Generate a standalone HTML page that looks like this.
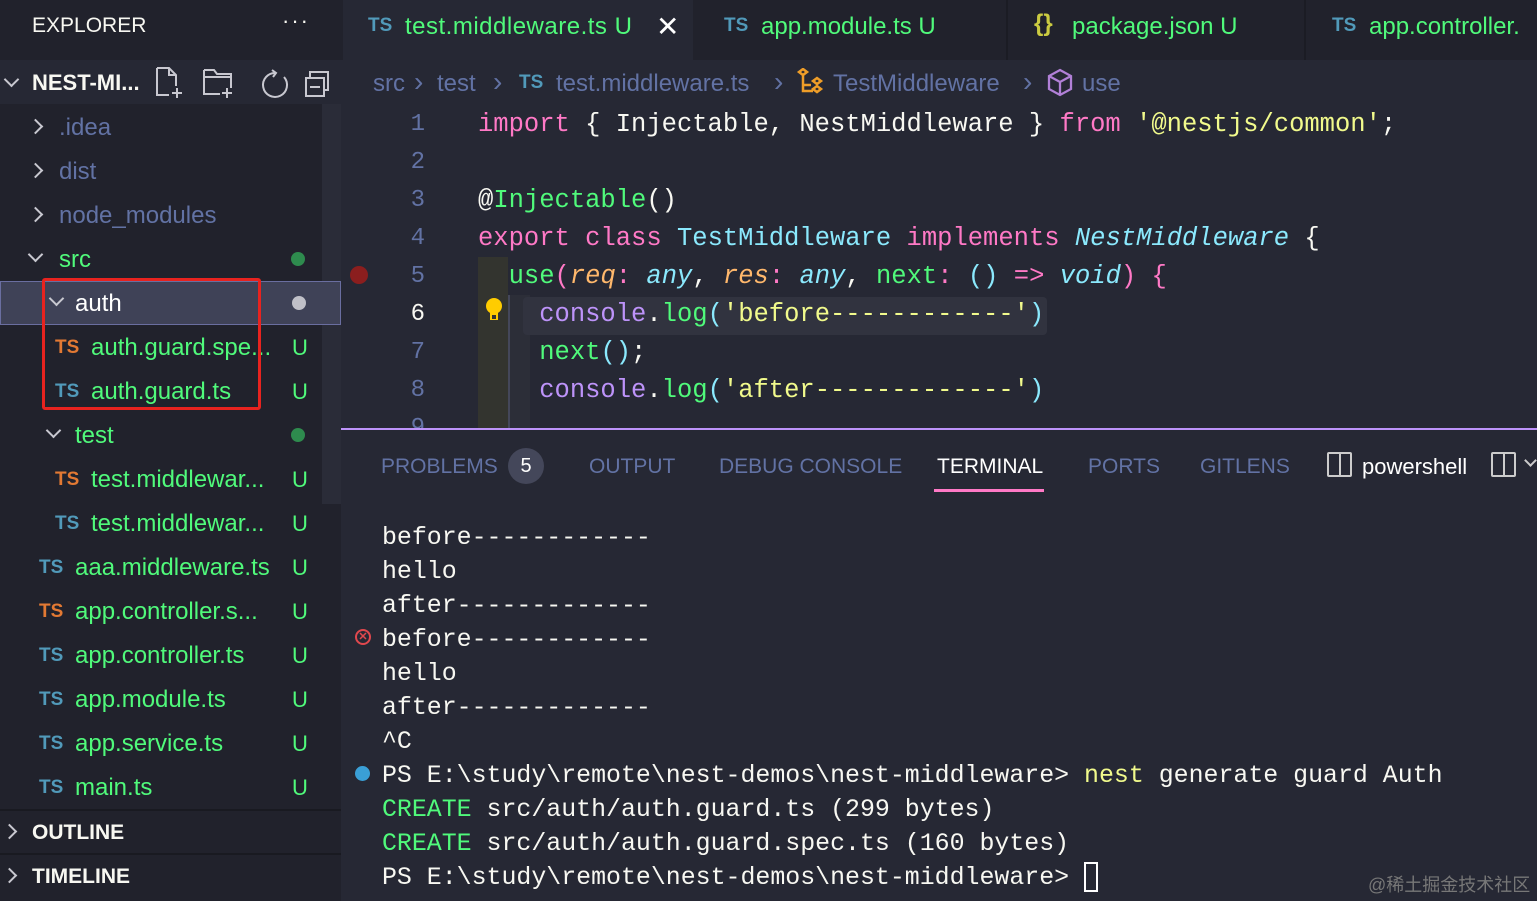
<!DOCTYPE html>
<html><head><meta charset="utf-8"><style>
*{margin:0;padding:0;box-sizing:border-box}
body{width:1537px;height:901px;overflow:hidden;background:#262834;font-family:"Liberation Sans","Noto Sans CJK SC",sans-serif;position:relative;color:#f8f8f2}
.a{position:absolute;white-space:pre}
.side{position:absolute;left:0;top:0;width:341px;height:901px;background:#21222c}
.row{position:absolute;left:0;width:341px;height:44px;font-size:24px;line-height:46px}
.ts{font-weight:bold;font-size:19px;color:#519aba;position:absolute;top:0}
.tso{color:#e37933}
.g{color:#50fa7b}
.u{position:absolute;left:292px;color:#50fa7b;font-size:22px}
.chev{position:absolute;width:11px;height:11px;border-right:2px solid #c8c8d0;border-bottom:2px solid #c8c8d0}
.mono{font-family:"Liberation Mono",monospace}
.code{font-size:25.5px;line-height:38px}
.term{font-size:24.9px;line-height:34px;color:#f8f8f2}
.pk{color:#ff79c6}.gr{color:#50fa7b}.cy{color:#8be9fd}.ye{color:#f1fa8c}.or{color:#ffb86c}.pu{color:#bd93f9}
.ln{color:#6272a4;font-size:24px;width:40px;text-align:right}
.ptab{font-size:21px;color:#6272a4;top:455px}
.bc{font-size:24px;color:#6272a4;top:70px}
</style></head><body>
<div class="side">
 <div class="a" style="left:32px;top:14px;font-size:21px;color:#f8f8f2">EXPLORER</div>
 <div class="a" style="left:282px;top:8px;font-size:22px;color:#f8f8f2;letter-spacing:2px">···</div>
 <div style="position:absolute;left:0;top:60px;width:341px;height:44px;background:#262834"></div>
 <div class="chev" style="left:6px;top:74px;transform:rotate(45deg)"></div>
 <div class="a" style="left:32px;top:70px;font-size:22px;font-weight:bold">NEST-MI...</div>
 <svg class="a" style="left:154px;top:66px" width="180" height="34" fill="none" stroke="#c8c8d0" stroke-width="2">
  <path d="M3 2h12l7 7v11M3 2v27h12M15 2v7h7M23 22v10M18 27h10"/>
  <path d="M50 4h10l3 4h14v14M50 4v24h16M50 11h27M73 22v10M68 27h10"/>
  <path d="M122 7a12 12 0 1 0 8 4M118 4l4 3-3 4"/>
  <path d="M152 12h18v18h-18zM156 12v-6h18v18h-4M156 21h10"/>
 </svg>
 <div style="position:absolute;left:322px;top:104px;width:19px;height:400px;background:#2a2c38"></div>
 <div class="row" style="top:105px"><div class="chev" style="left:30px;top:16px;transform:rotate(-45deg)"></div><span class="a" style="left:59px;color:#6272a4">.idea</span></div>
 <div class="row" style="top:149px"><div class="chev" style="left:30px;top:16px;transform:rotate(-45deg)"></div><span class="a" style="left:59px;color:#6272a4">dist</span></div>
 <div class="row" style="top:193px"><div class="chev" style="left:30px;top:16px;transform:rotate(-45deg)"></div><span class="a" style="left:59px;color:#6272a4">node_modules</span></div>
 <div class="row" style="top:237px"><div class="chev" style="left:30px;top:12px;transform:rotate(45deg)"></div><span class="a g" style="left:59px">src</span><div class="a" style="left:291px;top:15px;width:14px;height:14px;border-radius:50%;background:#2e8b4e"></div></div>
 <div class="row" style="top:281px;background:#3f4257;border:1px solid #6a6ea0"><div class="chev" style="left:50px;top:11px;transform:rotate(45deg)"></div><span class="a" style="left:74px;top:-1px;color:#fff">auth</span><div class="a" style="left:291px;top:14px;width:14px;height:14px;border-radius:50%;background:#c0c0c8"></div></div>
 <div class="row" style="top:325px"><span class="ts tso" style="left:55px">TS</span><span class="a g" style="left:91px">auth.guard.spe...</span><span class="u">U</span></div>
 <div class="row" style="top:369px"><span class="ts" style="left:55px">TS</span><span class="a g" style="left:91px">auth.guard.ts</span><span class="u">U</span></div>
 <div class="row" style="top:413px"><div class="chev" style="left:48px;top:12px;transform:rotate(45deg)"></div><span class="a g" style="left:75px">test</span><div class="a" style="left:291px;top:15px;width:14px;height:14px;border-radius:50%;background:#2e8b4e"></div></div>
 <div class="row" style="top:457px"><span class="ts tso" style="left:55px">TS</span><span class="a g" style="left:91px">test.middlewar...</span><span class="u">U</span></div>
 <div class="row" style="top:501px"><span class="ts" style="left:55px">TS</span><span class="a g" style="left:91px">test.middlewar...</span><span class="u">U</span></div>
 <div class="row" style="top:545px"><span class="ts" style="left:39px">TS</span><span class="a g" style="left:75px">aaa.middleware.ts</span><span class="u">U</span></div>
 <div class="row" style="top:589px"><span class="ts tso" style="left:39px">TS</span><span class="a g" style="left:75px">app.controller.s...</span><span class="u">U</span></div>
 <div class="row" style="top:633px"><span class="ts" style="left:39px">TS</span><span class="a g" style="left:75px">app.controller.ts</span><span class="u">U</span></div>
 <div class="row" style="top:677px"><span class="ts" style="left:39px">TS</span><span class="a g" style="left:75px">app.module.ts</span><span class="u">U</span></div>
 <div class="row" style="top:721px"><span class="ts" style="left:39px">TS</span><span class="a g" style="left:75px">app.service.ts</span><span class="u">U</span></div>
 <div class="row" style="top:765px"><span class="ts" style="left:39px">TS</span><span class="a g" style="left:75px">main.ts</span><span class="u">U</span></div>
 <div style="position:absolute;left:0;top:809px;width:341px;height:2px;background:#191a21"></div>
 <div class="row" style="top:810px"><div class="chev" style="left:4px;top:16px;transform:rotate(-45deg)"></div><span class="a" style="left:32px;font-size:21px;font-weight:bold">OUTLINE</span></div>
 <div style="position:absolute;left:0;top:853px;width:341px;height:2px;background:#191a21"></div>
 <div class="row" style="top:854px"><div class="chev" style="left:4px;top:16px;transform:rotate(-45deg)"></div><span class="a" style="left:32px;font-size:21px;font-weight:bold">TIMELINE</span></div>
 <div style="position:absolute;left:42px;top:278px;width:219px;height:132px;border:3px solid #e8231f;border-radius:3px"></div>
</div>
<!-- tabs -->
<div style="position:absolute;left:341px;top:0;width:1196px;height:60px;background:#21222c"></div>
<div style="position:absolute;left:343px;top:0;width:350px;height:60px;background:#262834"></div>
<div class="a" style="left:368px;top:15px;font-size:19px;font-weight:bold;color:#519aba">TS</div>
<div class="a g" style="left:405px;top:13px;font-size:24px;letter-spacing:0.5px">test.middleware.ts U</div>
<div class="a" style="left:656px;top:10px;font-size:28px;color:#fff">✕</div>
<div style="position:absolute;left:1006px;top:0;width:2px;height:60px;background:#1b1c24"></div>
<div style="position:absolute;left:1304px;top:0;width:2px;height:60px;background:#1b1c24"></div>
<div class="a" style="left:724px;top:15px;font-size:19px;font-weight:bold;color:#519aba">TS</div>
<div class="a g" style="left:761px;top:13px;font-size:24px">app.module.ts U</div>
<div class="a" style="left:1034px;top:10px;font-size:24px;font-weight:bold;color:#cbcb41">{}</div>
<div class="a g" style="left:1072px;top:13px;font-size:24px">package.json U</div>
<div class="a" style="left:1332px;top:15px;font-size:19px;font-weight:bold;color:#519aba">TS</div>
<div class="a g" style="left:1369px;top:13px;font-size:24px">app.controller.</div>
<!-- breadcrumb -->
<div class="a bc" style="left:373px">src</div>
<div class="a bc" style="left:414px;font-size:28px;top:66px">›</div>
<div class="a bc" style="left:437px">test</div>
<div class="a bc" style="left:493px;font-size:28px;top:66px">›</div>
<div class="a bc" style="left:519px;top:72px;font-size:19px;font-weight:bold;color:#519aba">TS</div>
<div class="a bc" style="left:556px">test.middleware.ts</div>
<div class="a bc" style="left:774px;font-size:28px;top:66px">›</div>
<svg class="a" style="left:796px;top:68px" width="30" height="30" fill="none" stroke="#ee9d28" stroke-width="2.5"><path d="M3 4l4-3 4 3-4 3zM7 7v10h8M17 13l4-3 4 3-4 3zM17 21l4-3 4 3-4 3zM7 17v6h10"/></svg>
<div class="a bc" style="left:833px">TestMiddleware</div>
<div class="a bc" style="left:1023px;font-size:28px;top:66px">›</div>
<svg class="a" style="left:1046px;top:68px" width="28" height="30" fill="none" stroke="#b180d7" stroke-width="2.3"><path d="M14 2l11 6v13l-11 6-11-6V8zM3 8l11 6 11-6M14 14v13"/></svg>
<div class="a bc" style="left:1082px">use</div>
<!-- code -->
<div class="a" style="left:350px;top:266px;width:18px;height:18px;border-radius:50%;background:#8b1e1e"></div>
<div style="position:absolute;left:478px;top:257px;width:30px;height:171px;background:#33342f"></div>
<div style="position:absolute;left:508px;top:295px;width:22px;height:133px;background:#2c2e38;border-left:2px solid #44475a"></div>
<div style="position:absolute;left:523px;top:297px;width:524px;height:38px;background:#31333f;border-radius:4px"></div>
<svg class="a" style="left:484px;top:297px" width="20" height="28"><circle cx="10" cy="9" r="8" fill="#ffcc00"/><rect x="6" y="14" width="8" height="9" fill="#ffcc00"/><rect x="8" y="18" width="4" height="4" fill="#333"/></svg>
<div class="a mono ln" style="left:385px;top:106px;line-height:38px">1
2
3
4
5
<span style="color:#f8f8f2">6</span>
7
8
9</div>
<div class="a mono code" style="left:478px;top:106px"><span class="pk">import</span> { Injectable, NestMiddleware } <span class="pk">from</span> <span class="ye">'@nestjs/common'</span>;

@<span class="gr">Injectable</span>()
<span class="pk">export</span> <span class="pk">class</span> <span class="cy">TestMiddleware</span> <span class="pk">implements</span> <span class="cy"><i>NestMiddleware</i></span> {
  <span class="gr">use</span><span class="pk">(</span><i class="or">req</i><span class="pk">:</span> <i class="cy">any</i>, <i class="or">res</i><span class="pk">:</span> <i class="cy">any</i>, <span class="gr">next</span><span class="pk">:</span> <span class="cy">()</span> <span class="pk">=></span> <i class="cy">void</i><span class="pk">)</span> <span class="pk">{</span>
    <span class="pu">console</span>.<span class="gr">log</span><span class="cy">(</span><span class="ye">'before------------'</span><span class="cy">)</span>
    <span class="gr">next</span><span class="cy">()</span>;
    <span class="pu">console</span>.<span class="gr">log</span><span class="cy">(</span><span class="ye">'after-------------'</span><span class="cy">)</span></div>
<!-- panel -->
<div style="position:absolute;left:341px;top:428px;width:1196px;height:473px;background:#262834;border-top:2px solid #bd93f9"></div>
<div class="a ptab" style="left:381px">PROBLEMS</div>
<div class="a" style="left:508px;top:448px;width:36px;height:36px;border-radius:50%;background:#44475a;color:#fff;font-size:20px;text-align:center;line-height:36px">5</div>
<div class="a ptab" style="left:589px">OUTPUT</div>
<div class="a ptab" style="left:719px">DEBUG CONSOLE</div>
<div class="a ptab" style="left:937px;color:#fff">TERMINAL</div>
<div class="a" style="left:934px;top:489px;width:110px;height:3px;background:#ff79c6"></div>
<div class="a ptab" style="left:1088px">PORTS</div>
<div class="a ptab" style="left:1200px">GITLENS</div>
<div class="a" style="left:1327px;top:452px;width:25px;height:25px;border:2px solid #ccc;border-radius:2px"><div style="position:absolute;left:10px;top:0;width:2px;height:21px;background:#ccc"></div></div>
<div class="a" style="left:1362px;top:454px;font-size:22px;color:#fff">powershell</div>
<div class="a" style="left:1491px;top:452px;width:25px;height:25px;border:2px solid #ccc;border-radius:2px"><div style="position:absolute;left:10px;top:0;width:2px;height:21px;background:#ccc"></div></div>
<div class="a" style="left:1526px;top:456px;width:9px;height:9px;border-right:2px solid #ccc;border-bottom:2px solid #ccc;transform:rotate(45deg)"></div>
<div class="a" style="left:355px;top:629px;width:16px;height:16px;border-radius:50%;border:2px solid #e0484e;color:#e0484e;font-size:11px;line-height:12px;text-align:center;font-weight:bold">✕</div>
<div class="a" style="left:355px;top:766px;width:15px;height:15px;border-radius:50%;background:#3a9fd6"></div>
<div class="a mono term" style="left:382px;top:521px">before------------
hello
after-------------
before------------
hello
after-------------
^C
PS E:\study\remote\nest-demos\nest-middleware> <span class="ye">nest</span> generate guard Auth
<span class="gr">CREATE</span> src/auth/auth.guard.ts (299 bytes)
<span class="gr">CREATE</span> src/auth/auth.guard.spec.ts (160 bytes)
PS E:\study\remote\nest-demos\nest-middleware> <span style="display:inline-block;width:14px;height:30px;border:2px solid #fff;vertical-align:middle"></span></div>
<div class="a" style="left:1368px;top:871px;font-size:18px;color:#777">@稀土掘金技术社区</div>
</body></html>
